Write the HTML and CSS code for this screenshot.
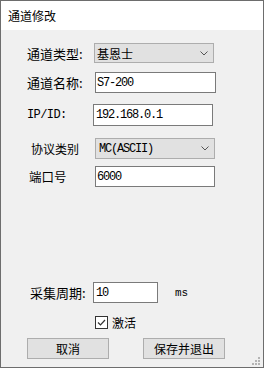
FILE: index.html
```html
<!DOCTYPE html>
<html lang="zh-CN">
<head>
  <meta charset="UTF-8">
  <title>通道修改</title>
  <link rel="stylesheet" href="styles.css">
</head>
<body>
  <div class="window">
    <div class="titlebar">通道修改</div>

    <div class="form">
      <div class="row row-type">
        <span class="label">通道类型:</span>
        <div class="combo">
          <span class="combo-text">基恩士</span>
          <svg class="chevron" width="8" height="5" viewBox="0 0 8 5"><path d="M0.5 0.5 L4 4 L7.5 0.5" fill="none" stroke="#555" stroke-width="1"/></svg>
        </div>
      </div>

      <div class="row row-name">
        <span class="label">通道名称:</span>
        <div class="field mono">S7-200</div>
      </div>

      <div class="row row-ip">
        <span class="label mono">IP/ID:</span>
        <div class="field mono">192.168.0.1</div>
      </div>

      <div class="row row-proto">
        <span class="label">协议类别</span>
        <div class="combo">
          <span class="combo-text mono">MC(ASCII)</span>
          <svg class="chevron" width="8" height="5" viewBox="0 0 8 5"><path d="M0.5 0.5 L4 4 L7.5 0.5" fill="none" stroke="#555" stroke-width="1"/></svg>
        </div>
      </div>

      <div class="row row-port">
        <span class="label">端口号</span>
        <div class="field mono">6000</div>
      </div>

      <div class="row row-cycle">
        <span class="label">采集周期:</span>
        <div class="field field-short mono">10</div>
        <span class="unit mono">ms</span>
      </div>

      <div class="row row-check">
        <span class="checkbox">
          <svg width="11" height="11" viewBox="0 0 11 11"><path d="M2 5.5 L4.5 8 L9 3" fill="none" stroke="#333" stroke-width="1.2"/></svg>
        </span>
        <span class="check-label">激活</span>
      </div>

      <div class="row row-buttons">
        <div class="btn">取消</div>
        <div class="btn">保存并退出</div>
      </div>
    </div>

    <svg class="grip" width="9" height="9" viewBox="0 0 9 9">
      <rect x="6" y="0" width="2" height="2" fill="#b4b4b4"/>
      <rect x="3" y="3" width="2" height="2" fill="#b4b4b4"/>
      <rect x="6" y="3" width="2" height="2" fill="#b4b4b4"/>
      <rect x="0" y="6" width="2" height="2" fill="#b4b4b4"/>
      <rect x="3" y="6" width="2" height="2" fill="#b4b4b4"/>
      <rect x="6" y="6" width="2" height="2" fill="#b4b4b4"/>
    </svg>
  </div>
</body>
</html>
```

FILE: styles.css
```css
body {
  margin: 0;
  font-family: "Noto Sans CJK SC", "Liberation Sans", sans-serif;
  color: #000;
}

.window {
  position: relative;
  width: 264px;
  height: 368px;
  box-sizing: border-box;
  border: 1px solid #6d6d6d;
  background-color: #f0f0f0;
}

.titlebar {
  height: 29px;
  background-color: #fff;
  padding-left: 7px;
  font-size: 12px;
  line-height: 30px;
}

.form {
  padding-left: 26px;
  display: flex;
  flex-direction: column;
}

.row {
  display: flex;
  align-items: center;
  font-size: 13px;
}

.label {
  width: 67px;
  flex-shrink: 0;
  white-space: nowrap;
}

.mono {
  font-family: "Liberation Mono", monospace;
  font-size: 12px;
  letter-spacing: -1.2px;
}

.field {
  box-sizing: border-box;
  height: 100%;
  width: 121px;
  border: 1px solid #7a7a7a;
  background-color: #fff;
  display: flex;
  align-items: center;
  padding-left: 1px;
}

.combo {
  box-sizing: border-box;
  height: 100%;
  width: 120px;
  border: 1px solid #adadad;
  background-color: #e1e1e1;
  display: flex;
  align-items: center;
  justify-content: space-between;
  padding: 0 5px 0 2px;
  font-size: 12px;
}

.chevron {
  display: block;
}

/* 各行の位置 */
.row-type {
  margin-top: 13px;
  height: 20px;
}

.row-name {
  margin-top: 9px;
  height: 21px;
}
.row-name .label {
  width: 68px;
}

.row-ip {
  margin-top: 11px;
  height: 22px;
}
.row-ip .label {
  width: 66px;
  letter-spacing: -0.6px;
}
.row-ip .field {
  width: 120px;
  padding-left: 2px;
}

.row-proto {
  margin-top: 12px;
  height: 21px;
}
.row-proto .label {
  width: 64px;
  padding-left: 4px;
  font-size: 12px;
}
.row-proto .combo-text {
  padding-left: 1px;
}

.row-port {
  margin-top: 7px;
  height: 21px;
}
.row-port .label {
  width: 66px;
  padding-left: 2px;
  font-size: 12.5px;
}
.row-port .field {
  width: 120px;
}

.row-cycle {
  margin-top: 95px;
  height: 21px;
}
.row-cycle .label {
  width: 63px;
  padding-left: 3px;
}
.field-short {
  width: 65px;
  padding-left: 2px;
}
.unit {
  margin-left: 17px;
  font-size: 11px;
  letter-spacing: 0;
}

.row-check {
  margin-top: 13px;
  height: 13px;
  padding-left: 68px;
}

.checkbox {
  box-sizing: border-box;
  width: 13px;
  height: 13px;
  border: 1px solid #333;
  background-color: #fff;
  display: flex;
}

.check-label {
  margin-left: 4px;
  font-size: 12px;
}

.row-buttons {
  margin-top: 9px;
  height: 21px;
  gap: 34px;
}

.btn {
  box-sizing: border-box;
  width: 82px;
  height: 21px;
  border: 1px solid #adadad;
  background-color: #e1e1e1;
  font-size: 12px;
  display: flex;
  align-items: center;
  justify-content: center;
}

.grip {
  position: absolute;
  right: 2px;
  bottom: 1px;
}
```
